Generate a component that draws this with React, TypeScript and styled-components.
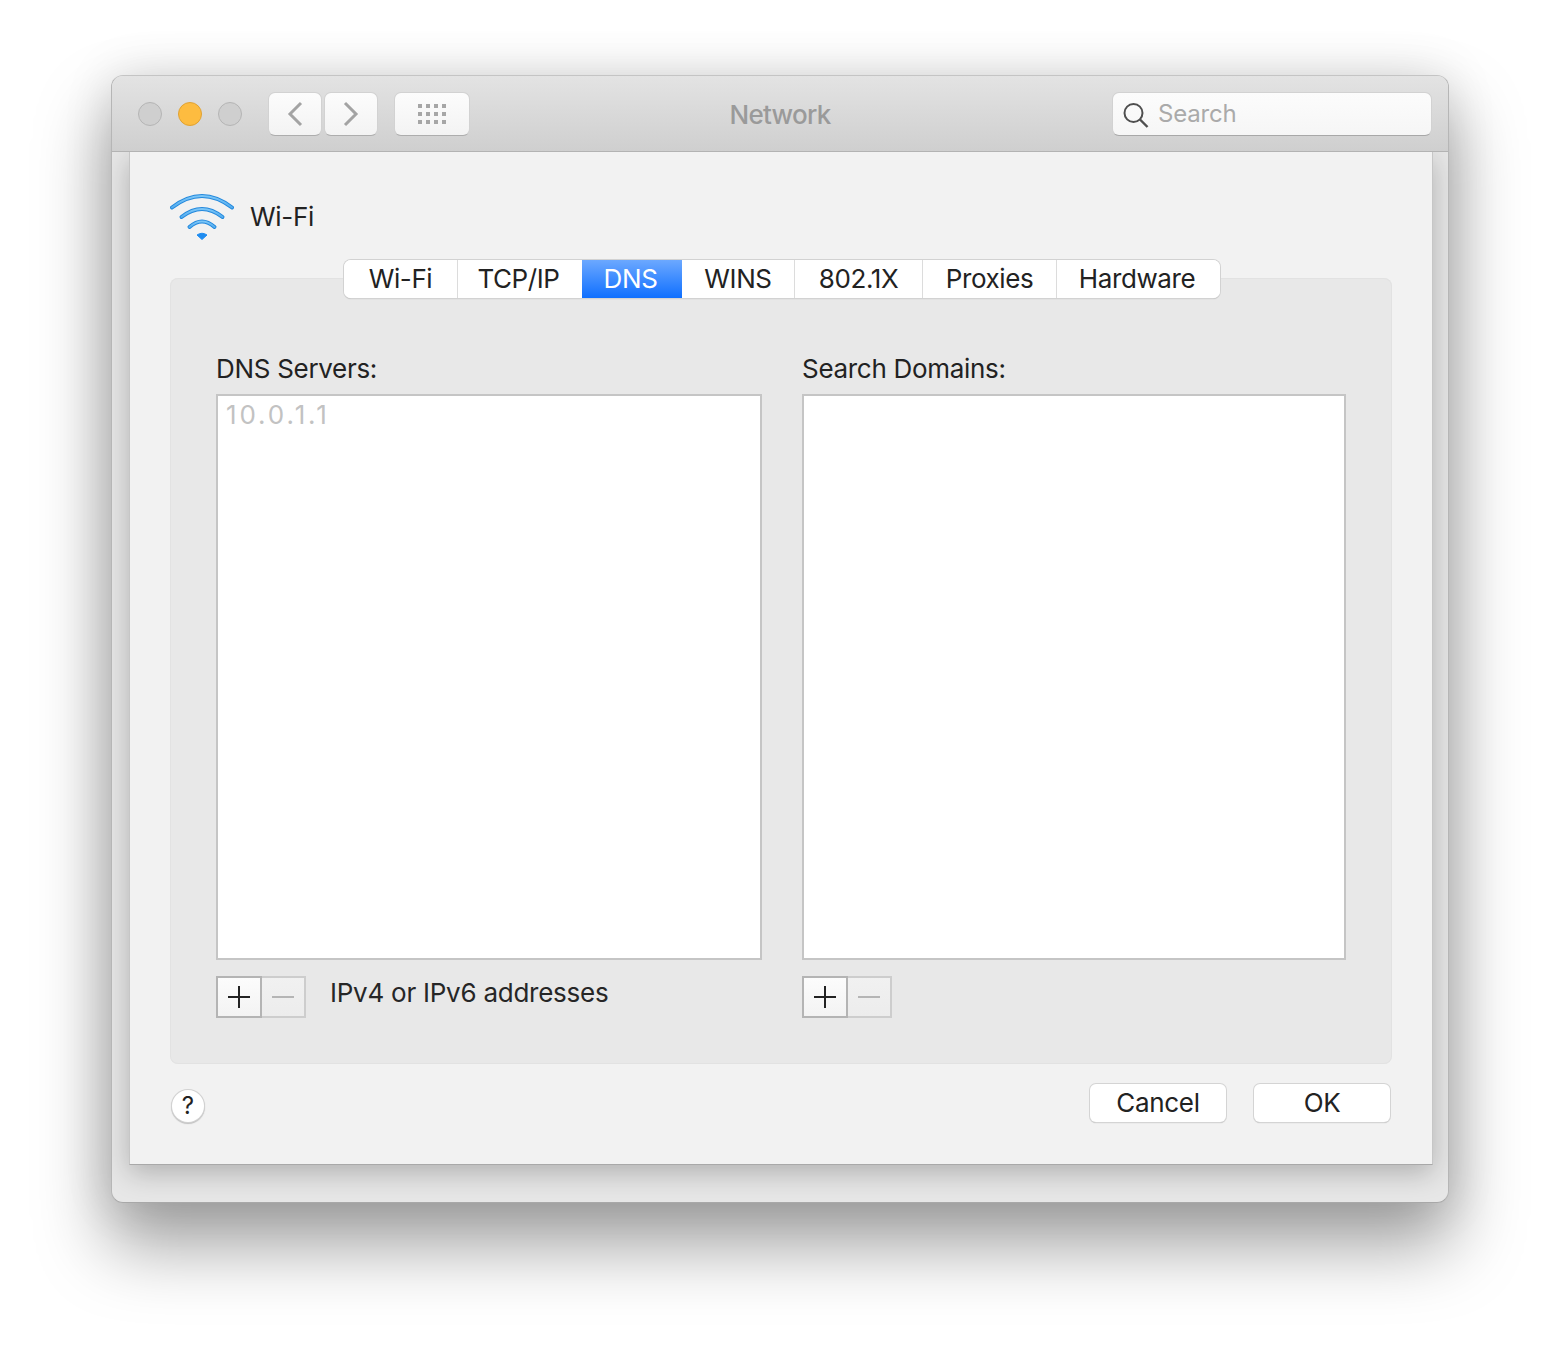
import React from "react";
import styled, { createGlobalStyle } from "styled-components";

const Global = createGlobalStyle`
  html, body { margin: 0; padding: 0; background: #fff; }
  body { font-family: Inter, "Liberation Sans", sans-serif; -webkit-font-smoothing: antialiased; }
  * { box-sizing: border-box; }
`;

const Page = styled.div`
  width: 1560px;
  height: 1350px;
  padding: 75px 111px 0 111px;
  overflow: hidden;
`;

const Window = styled.div`
  width: 1338px;
  height: 1128px;
  border: 1px solid #b6b6b6;
  border-top-color: #c4c4c4;
  border-bottom-color: #a8a8a8;
  border-radius: 12px;
  background: #e7e7e7;
  box-shadow: 0 40px 70px 4px rgba(0, 0, 0, 0.36), 0 0 50px rgba(0, 0, 0, 0.12);
  overflow: hidden;
  display: flex;
  flex-direction: column;
`;

const TitleBar = styled.div`
  position: relative;
  z-index: 2;
  flex: none;
  height: 76px;
  background: linear-gradient(#e3e3e3, #cfcfcf);
  border-bottom: 1px solid #b3b3b3;
  display: grid;
  grid-template-columns: 1fr auto 1fr;
  align-items: center;
  padding: 1px 16px 0 16px;
`;

const Left = styled.div`
  display: flex;
  align-items: center;
`;

const Lights = styled.div`
  display: flex;
  gap: 16px;
  margin: 0 26px 0 10px;
`;

const Light = styled.span<{ $on?: boolean }>`
  width: 24px;
  height: 24px;
  border-radius: 50%;
  background: ${(p) => (p.$on ? "#fdbc40" : "#cfcfcf")};
  border: 1px solid ${(p) => (p.$on ? "#e0a233" : "#b5b5b5")};
`;

const ToolButton = styled.button<{ $w: number; $mr: number }>`
  width: ${(p) => p.$w}px;
  height: 44px;
  margin-right: ${(p) => p.$mr}px;
  padding: 0;
  display: flex;
  align-items: center;
  justify-content: center;
  border: 1px solid #d2d2d2;
  border-bottom-color: #adadad;
  border-radius: 7px;
  background: linear-gradient(#fcfcfc, #f3f3f3);
`;

const Title = styled.div`
  margin-top: 1px;
  font-size: 26px;
  font-weight: 500;
  line-height: 32px;
  color: #9a9a9a;
  letter-spacing: -0.7px;
`;

const SearchField = styled.div`
  justify-self: end;
  width: 320px;
  height: 44px;
  display: flex;
  align-items: center;
  gap: 7px;
  padding: 0 0 2px 10px;
  border: 1px solid #d2d2d2;
  border-bottom-color: #a8a8a8;
  border-radius: 7px;
  background: linear-gradient(#fcfcfc, #f6f6f6);
  font-size: 24px;
  letter-spacing: -0.2px;
  color: #aaaaaa;
`;

const Body = styled.div`
  flex: none;
  width: 1304px;
  height: 1013px;
  margin-left: 17px;
  background: #f2f2f2;
  border-left: 1px solid #c6c6c6;
  border-right: 1px solid #c6c6c6;
  box-shadow: 0 8px 26px rgba(0, 0, 0, 0.24);
  border-bottom: 1px solid #a9a9a9;
  padding: 40px 40px 0 40px;
`;

const Heading = styled.div`
  display: flex;
  align-items: center;
  gap: 16px;
  height: 50px;
  font-size: 26px;
  color: #222;
  letter-spacing: -0.3px;
`;

const HeadingText = styled.span`
  margin-bottom: 2px;
`;

const Panel = styled.div`
  display: flow-root;
  margin-top: 36px;
  width: 1222px;
  height: 786px;
  background: #e8e8e8;
  border-radius: 8px;
  box-shadow: inset 0 0 0 1px #e2e2e2;
  padding: 0 46px;
`;

const Tabs = styled.div`
  display: flex;
  width: 876px;
  height: 38px;
  margin: -18px 0 0 128px;
  position: relative;
  border-radius: 7px;
  background: #fff;
  box-shadow: 0 0 0 1px #d2d2d2, 0 1px 1px 0 #a8a8a8;
  overflow: hidden;
`;

const Tab = styled.div<{ $w: number; $active?: boolean; $sep?: boolean }>`
  flex: none;
  width: ${(p) => p.$w}px;
  display: flex;
  align-items: center;
  justify-content: center;
  padding: 0 ${(p) => (p.$sep ? "0" : "3px")} 1px 0;
  font-size: 26px;
  letter-spacing: -0.4px;
  color: ${(p) => (p.$active ? "#fff" : "#222")};
  background: ${(p) => (p.$active ? "linear-gradient(#6ca8ff, #0f6fff)" : "#fff")};
  border-right: ${(p) => (p.$sep ? "1px solid #dcdcdc" : "0")};
`;

const Columns = styled.div`
  display: grid;
  grid-template-columns: 546px 544px;
  column-gap: 40px;
  margin-top: 56px;
`;

const Column = styled.div`
  display: flex;
  flex-direction: column;
`;

const Label = styled.div`
  height: 40px;
  line-height: 30px;
  font-size: 26px;
  letter-spacing: -0.3px;
  color: #222;
`;

const ListBox = styled.div`
  height: 566px;
  background: #fff;
  border: 2px solid #c5c5c5;
  padding: 2px 8px;
  font-size: 26px;
  line-height: 34px;
  letter-spacing: 2.9px;
  color: #c2c2c2;
`;

const BelowList = styled.div`
  display: flex;
  margin-top: 16px;
`;

const PlusMinus = styled.div`
  display: flex;
  flex: none;
`;

const SmallButton = styled.div<{ $off?: boolean }>`
  width: ${(p) => (p.$off ? "44px" : "46px")};
  height: 42px;
  display: flex;
  align-items: center;
  justify-content: center;
  border: 2px solid ${(p) => (p.$off ? "#cdcdcd" : "#b4b4b4")};
  ${(p) => (p.$off ? "border-left: 0;" : "")}
  background: ${(p) => (p.$off ? "linear-gradient(#f1f1f1, #ececec)" : "linear-gradient(#fcfcfc, #f3f3f3)")};
`;

const Hint = styled.div`
  margin-left: 24px;
  font-size: 26px;
  line-height: 34px;
  letter-spacing: -0.25px;
  color: #262626;
`;

const Footer = styled.div`
  display: flex;
  align-items: flex-start;
  justify-content: space-between;
  width: 1222px;
  margin-top: 20px;
`;

const Help = styled.div`
  width: 32px;
  height: 32px;
  margin: 6px 0 0 2px;
  padding-bottom: 1px;
  border-radius: 50%;
  background: #fff;
  box-shadow: 0 0 0 1px #d2d2d2, 0 1px 1px 1px #c0c0c0;
  display: flex;
  align-items: center;
  justify-content: center;
  font-size: 24px;
  color: #222;
`;

const Actions = styled.div`
  display: flex;
  gap: 28px;
  margin-right: 2px;
`;

const ActionButton = styled.div`
  width: 136px;
  height: 38px;
  padding-bottom: 2px;
  display: flex;
  align-items: center;
  justify-content: center;
  border-radius: 6px;
  background: #fff;
  box-shadow: 0 0 0 1px #d4d4d4, 0 1px 1px 0 #a8a8a8;
  font-size: 26px;
  letter-spacing: -0.3px;
  color: #222;
`;

const Chevron = ({ right }: { right?: boolean }) => (
  <svg width="18" height="26" viewBox="0 0 18 26" fill="none">
    <path
      d={right ? "M3 2 L14 13 L3 24" : "M15 2 L4 13 L15 24"}
      stroke="#a3a3a3"
      strokeWidth="3"
    />
  </svg>
);

const GridIcon = () => (
  <svg width="30" height="20" viewBox="0 0 30 20" fill="#a6a6a6">
    {[0, 8, 16].map((y) =>
      [0, 8, 16, 24].map((x) => <rect key={`${x}-${y}`} x={x + 1} y={y} width="4" height="4" />)
    )}
  </svg>
);

const Magnifier = () => (
  <svg width="28" height="28" viewBox="0 0 28 28" fill="none" stroke="#4f4f4f" overflow="visible">
    <circle cx="10.5" cy="14" r="9" strokeWidth="2" />
    <path d="M17 20.5 L24.5 28" strokeWidth="2.4" />
  </svg>
);

const WifiIcon = () => (
  <svg width="64" height="48" viewBox="0 0 64 48" fill="none">
    <defs>
      <linearGradient id="arc" x1="0" y1="0" x2="0" y2="1">
        <stop offset="0" stopColor="#7cc6f7" />
        <stop offset="1" stopColor="#55aef0" />
      </linearGradient>
    </defs>
    {["M2 14.5 Q32 -8.5 62 14.5", "M11.5 24 Q32 8 52.5 24", "M19.5 34 Q32 23 44.5 34"].map((d) => (
      <g key={d}>
        <path d={d} stroke="#2388dc" strokeWidth="4" strokeLinecap="round" />
        <path d={d} stroke="url(#arc)" strokeWidth="2" strokeLinecap="round" />
      </g>
    ))}
    <path d="M27 42 Q32 38.5 37 42 L32 46.5 Z" fill="#1f8cf0" stroke="#1f8cf0" strokeLinejoin="round" />
  </svg>
);

const PlusIcon = () => (
  <svg width="24" height="24" viewBox="0 0 24 24" stroke="#222" strokeWidth="2">
    <path d="M12 1 V23 M1 12 H23" />
  </svg>
);

const MinusIcon = () => (
  <svg width="24" height="24" viewBox="0 0 24 24" stroke="#b5b5b5" strokeWidth="2">
    <path d="M1 12 H23" />
  </svg>
);

const tabs: { name: string; w: number; active?: boolean; sep?: boolean }[] = [
  { name: "Wi-Fi", w: 114, sep: true },
  { name: "TCP/IP", w: 124 },
  { name: "DNS", w: 100, active: true },
  { name: "WINS", w: 113, sep: true },
  { name: "802.1X", w: 128, sep: true },
  { name: "Proxies", w: 134, sep: true },
  { name: "Hardware", w: 163 },
];

const AddRemove = () => (
  <PlusMinus>
    <SmallButton>
      <PlusIcon />
    </SmallButton>
    <SmallButton $off>
      <MinusIcon />
    </SmallButton>
  </PlusMinus>
);

export default function App() {
  return (
    <Page>
      <Global />
      <Window>
        <TitleBar>
          <Left>
            <Lights>
              <Light />
              <Light $on />
              <Light />
            </Lights>
            <ToolButton $w={54} $mr={2}>
              <Chevron />
            </ToolButton>
            <ToolButton $w={54} $mr={16}>
              <Chevron right />
            </ToolButton>
            <ToolButton $w={76} $mr={0}>
              <GridIcon />
            </ToolButton>
          </Left>
          <Title>Network</Title>
          <SearchField>
            <Magnifier />
            Search
          </SearchField>
        </TitleBar>
        <Body>
          <Heading>
            <WifiIcon />
            <HeadingText>Wi-Fi</HeadingText>
          </Heading>
          <Panel>
            <Tabs>
              {tabs.map((t) => (
                <Tab key={t.name} $w={t.w} $active={t.active} $sep={t.sep}>
                  {t.name}
                </Tab>
              ))}
            </Tabs>
            <Columns>
              <Column>
                <Label>DNS Servers:</Label>
                <ListBox>10.0.1.1</ListBox>
                <BelowList>
                  <AddRemove />
                  <Hint>IPv4 or IPv6 addresses</Hint>
                </BelowList>
              </Column>
              <Column>
                <Label>Search Domains:</Label>
                <ListBox />
                <BelowList>
                  <AddRemove />
                </BelowList>
              </Column>
            </Columns>
          </Panel>
          <Footer>
            <Help>?</Help>
            <Actions>
              <ActionButton>Cancel</ActionButton>
              <ActionButton>OK</ActionButton>
            </Actions>
          </Footer>
        </Body>
      </Window>
    </Page>
  );
}
